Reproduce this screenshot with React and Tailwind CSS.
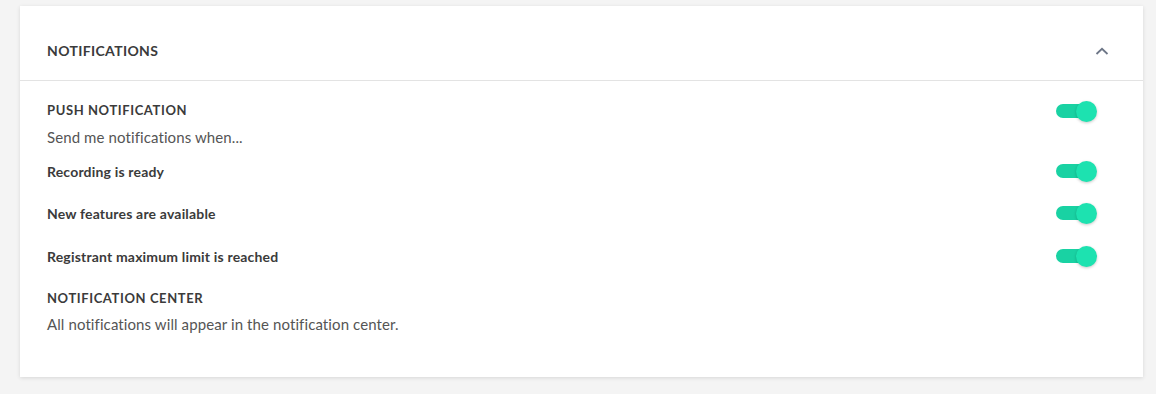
import React from "react";

function Toggle() {
  return (
    <div className="relative w-[41px] h-[21px] flex items-center">
      <div className="w-[36px] h-[14px] rounded-full bg-[#19d2a3]" />
      <div className="absolute right-0 top-0 w-[21px] h-[21px] rounded-full bg-[#1de2b0] shadow-[0_1px_3px_rgba(0,0,0,0.22)]" />
    </div>
  );
}

function Row({ children, className = "" }) {
  return (
    <div className={"flex items-center justify-between h-[24px] " + className}>
      <div className="text-[14px] font-bold tracking-[0.18px] text-[#3b3b3b]">{children}</div>
      <Toggle />
    </div>
  );
}

export default function App() {
  return (
    <div className="w-[1156px] h-[394px] bg-[#f4f4f4] pt-[6px] pl-[20px]" style={{ fontFamily: "Lato, 'Noto Sans', sans-serif" }}>
      <div className="w-[1123px] bg-white shadow-[0_1px_4px_rgba(0,0,0,0.12)]">
        <div className="h-[75px] pt-[14px] flex items-center justify-between pl-[27px] pr-[34px] border-b border-[#e3e3e3]">
          <div className="text-[14px] font-bold tracking-[0.35px] text-[#3b3b3b] uppercase">Notifications</div>
          <svg width="14" height="8" viewBox="0 0 14 8" fill="none" className="mt-[2px]">
            <path d="M1.5 7L7 1.8L12.5 7" stroke="#6d7687" strokeWidth="1.8" />
          </svg>
        </div>
        <div className="pl-[27px] pr-[46px] pt-[18px] pb-[43px]">
          <div className="flex items-center justify-between h-[24px]">
            <div className="text-[13px] font-bold tracking-[0.6px] text-[#3b3b3b] uppercase">Push Notification</div>
            <Toggle />
          </div>
          <div className="h-[20px] mt-[4px] flex items-center text-[15px] tracking-[0.1px] text-[#555555]">Send me notifications when...</div>
          <Row className="mt-[12px]">Recording is ready</Row>
          <Row className="mt-[18px]">New features are available</Row>
          <Row className="mt-[19px]">Registrant maximum limit is reached</Row>
          <div className="h-[20px] mt-[21px] flex items-center text-[13px] font-bold tracking-[0.6px] text-[#3b3b3b] uppercase">Notification Center</div>
          <div className="h-[20px] mt-[5px] flex items-center text-[15px] tracking-[0.1px] text-[#555555]">All notifications will appear in the notification center.</div>
        </div>
      </div>
    </div>
  );
}
